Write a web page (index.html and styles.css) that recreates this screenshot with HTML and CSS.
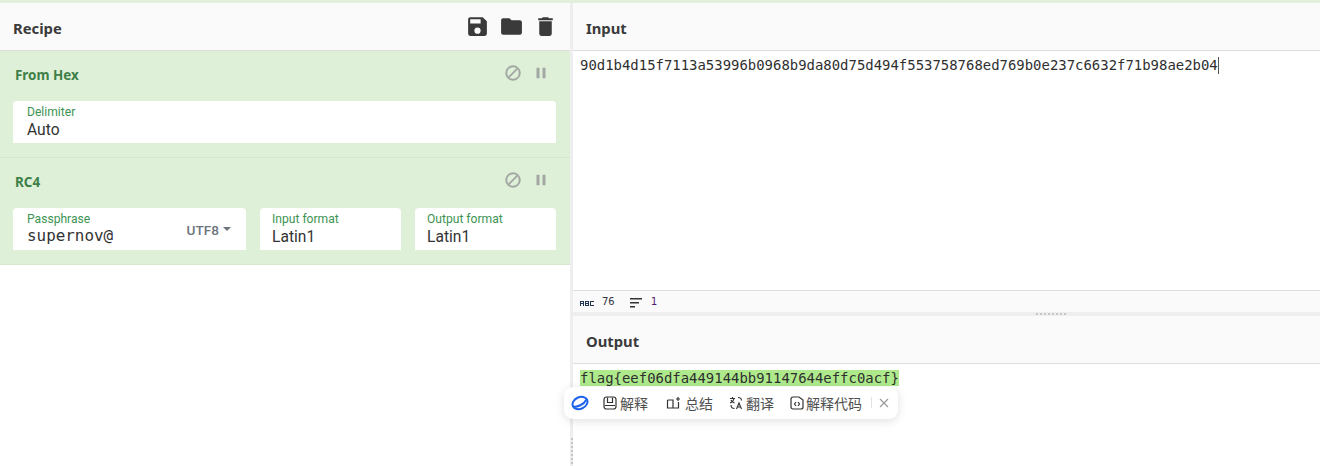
FILE: index.html
```html
<!DOCTYPE html>
<html lang="en">
<head>
<meta charset="utf-8">
<title>Recipe</title>
<link rel="stylesheet" href="styles.css">
</head>
<body>
<div class="topline"></div>
<main class="app">
  <section class="recipe">
    <header class="head">
      <h2>Recipe</h2>
      <div class="head-icons">
        <svg width="25" height="25" viewBox="0 0 24 24"><path d="M17 3H5a2 2 0 0 0-2 2v14a2 2 0 0 0 2 2h14a2 2 0 0 0 2-2V7l-4-4zm-5 16a3 3 0 1 1 0-6 3 3 0 0 1 0 6zm3-10H5V5h10v4z"/></svg>
        <svg width="25" height="25" viewBox="0 0 24 24"><path d="M10 4H4a2 2 0 0 0-2 2v12a2 2 0 0 0 2 2h16a2 2 0 0 0 2-2V8a2 2 0 0 0-2-2h-8l-2-2z"/></svg>
        <svg width="25" height="25" viewBox="0 0 24 24"><path d="M6 19a2 2 0 0 0 2 2h8a2 2 0 0 0 2-2V7H6v12zM19 4h-3.500l-1-1h-5l-1 1H5v2h14V4z"/></svg>
      </div>
    </header>
    <article class="op">
      <div class="op-title">
        <h3>From Hex</h3>
        <div class="op-icons">
          <svg class="ban" width="18" height="18" viewBox="0 0 24 24"><path d="M12 2a10 10 0 1 0 0 20 10 10 0 0 0 0-20zM20 12a8 8 0 0 1-12.900 6.300L18.300 7.100A8 8 0 0 1 20 12zM12 4a8 8 0 0 1 4.900 1.700L5.700 16.900A8 8 0 0 1 12 4z"/></svg>
          <svg width="18" height="18" viewBox="0 0 24 24"><path d="M6 19h4V5H6v14zm8-14v14h4V5h-4z"/></svg>
        </div>
      </div>
      <div class="fields">
        <div class="field grow"><label>Delimiter</label><div class="value">Auto</div></div>
      </div>
    </article>
    <article class="op">
      <div class="op-title">
        <h3>RC4</h3>
        <div class="op-icons">
          <svg class="ban" width="18" height="18" viewBox="0 0 24 24"><path d="M12 2a10 10 0 1 0 0 20 10 10 0 0 0 0-20zM20 12a8 8 0 0 1-12.900 6.300L18.300 7.100A8 8 0 0 1 20 12zM12 4a8 8 0 0 1 4.900 1.700L5.700 16.900A8 8 0 0 1 12 4z"/></svg>
          <svg width="18" height="18" viewBox="0 0 24 24"><path d="M6 19h4V5H6v14zm8-14v14h4V5h-4z"/></svg>
        </div>
      </div>
      <div class="fields">
        <div class="field pass">
          <label>Passphrase</label>
          <div class="value mono">supernov@</div>
          <span class="enc">UTF8<i class="caret"></i></span>
        </div>
        <div class="field fmt"><label>Input format</label><div class="value">Latin1</div></div>
        <div class="field fmt"><label>Output format</label><div class="value">Latin1</div></div>
      </div>
    </article>
  </section>
  <div class="gutter"></div>
  <section class="io">
    <header class="head"><h2>Input</h2></header>
    <div class="text input-text">90d1b4d15f7113a53996b0968b9da80d75d494f553758768ed769b0e237c6632f71b98ae2b04<span class="cursor"></span></div>
    <footer class="status">
      <svg class="abc" width="14" height="6" viewBox="0 0 14 6"><path d="M0 1h4v5H3V4H1v2H0zM1 2v1h2V2zM5 1h4v5H5zM6 2v1h2V2zM6 4v1h2V4zM10 1h4v1h-3v3h3v1h-4z"/></svg>
      <span class="num">76</span>
      <svg class="lines" width="14" height="10" viewBox="0 0 14 10"><path d="M0 0h12v1.500H0zM0 4h9v1.500H0zM0 8h5v1.500H0z"/></svg>
      <span class="num purple">1</span>
    </footer>
    <div class="hbar"><span class="grip-h"></span></div>
    <header class="head"><h2>Output</h2></header>
    <div class="text output-text"><mark>flag{eef06dfa449144bb91147644effc0acf}</mark></div>
  </section>
</main>
<nav class="popup">
  <svg class="logo" width="18" height="18" viewBox="0 0 18 18"><g fill="none" stroke="#1f63ea" stroke-width="2"><ellipse cx="9" cy="9" rx="7.800" ry="5.800" transform="rotate(-25 9 9)"/><path d="M2 12.500C6 13.500 13 10.500 15.500 5.500"/></g></svg>
  <span class="tool first"><svg width="14" height="14" viewBox="0 0 14 14"><g fill="none" stroke="#333" stroke-width="1.200"><rect x="1" y="1" width="12" height="12" rx="2.500"/><path d="M4.500 1.500v5h5v-5M2 9.500h10"/></g></svg>解释</span>
  <span class="tool wide"><svg width="15" height="14" viewBox="0 0 15 14"><g fill="none" stroke="#333" stroke-width="1.200"><path d="M7 4H2.500A1 1 0 0 0 1.500 5v7h5.500zM7 12h5.500V6M7 4v8"/><path d="M12 1v4M10 3h4"/></g></svg>总结</span>
  <span class="tool"><svg width="14" height="14" viewBox="0 0 14 14"><g fill="none" stroke="#333" stroke-width="1.100"><path d="M1 2.500h5M3.500 1v1.500M5 2.500C4.500 5 3 6.500 1 7M2 4c.5 1.500 2 2.500 3.500 3M9 1.500c2 0 3.500 1 3.500 3M2 9c0 2 1.500 3.500 3.500 3.500M7.500 13l2.500-6 2.500 6M8.500 11h3"/></g></svg>翻译</span>
  <span class="tool code"><svg width="14" height="14" viewBox="0 0 14 14"><g fill="none" stroke="#333" stroke-width="1.200"><path d="M3 1h6l4 3v7a2 2 0 0 1-2 2H3a2 2 0 0 1-2-2V3a2 2 0 0 1 2-2z"/><path d="M6 6L4.500 8 6 10M8 6l1.500 2L8 10"/></g></svg>解释代码</span>
  <span class="sep"></span>
  <svg class="close" width="10" height="10" viewBox="0 0 10 10"><path d="M1 1l8 8M9 1l-8 8" stroke="#9a9a9a" stroke-width="1.200" fill="none"/></svg>
</nav>
<span class="grip-low"></span>
</body>
</html>
```
FILE: styles.css
```css
* { box-sizing: border-box; }
html, body { margin: 0; height: 466px; overflow: hidden; background: #fff; }
body { font-family: Roboto, "Noto Sans CJK SC", sans-serif; color: #333; position: relative; }
h2, h3 { margin: 0; }

.topline { height: 3px; background: #e3efdc; }
.app { display: grid; grid-template-columns: 570px 3px 747px; height: 463px; }

.head {
  height: 48px;
  background: #fafafa;
  border-bottom: 1px solid #dddddd;
  display: flex;
  align-items: center;
  justify-content: space-between;
  padding: 0 13px;
}
.head h2 { font-family: "Noto Sans", sans-serif; font-size: 14.800px; font-weight: 700; line-height: 1; color: #3a3a3a; padding-top: 3px; }
.head-icons { display: flex; gap: 9px; fill: #3a3a3a; margin-right: -1px; }
.head-icons svg { display: block; }

.op { background: #dff0d8; border-bottom: 1px solid #d5e7cc; height: 107px; padding: 0 14px 0 13px; }
.op-title { display: flex; justify-content: space-between; align-items: flex-start; height: 50px; }
.op-title h3 { font-family: "Noto Sans", sans-serif; font-size: 13.400px; font-weight: 700; color: #3d7f47; line-height: 16px; padding: 16px 0 0 2px; }
.op-icons { display: flex; gap: 10px; fill: #a3a7a3; padding-top: 13px; margin-right: 6px; }
.op-icons svg { display: block; }
.op-icons .ban { stroke: #a3a7a3; stroke-width: .6; }

.fields { display: flex; gap: 14px; }
.field {
  position: relative;
  background: #fff;
  height: 42px;
  border-radius: 4px 4px 0 0;
  padding: 4px 14px 0;
}
.grow { flex: 1; }
.pass { width: 233px; }
.fmt { width: 141px; padding-left: 12px; }
.field label { display: block; font-size: 12.100px; line-height: 14px; color: #3d9353; }
.value { font-size: 15.600px; line-height: 20px; color: #333; margin-top: 1px; }
.value.mono { font-family: "DejaVu Sans Mono", monospace; font-size: 15.900px; margin-top: 0; }
.enc { position: absolute; right: 15px; top: 14px; font-size: 13.600px; font-weight: 500; line-height: 16px; color: #6c757d; display: flex; align-items: center; gap: 4px; }
.caret { width: 0; height: 0; border-left: 4px solid transparent; border-right: 4px solid transparent; border-top: 4px solid #6c757d; margin-top: -3px; }

.gutter { background: #eeeeee; }

.io { display: flex; flex-direction: column; }
.text {
  font-family: "DejaVu Sans Mono", monospace;
  font-size: 13.950px;
  line-height: 19px;
  color: #2f2f2f;
  padding: 5px 7px 0;
  white-space: pre;
}
.input-text { height: 239px; }
.cursor { display: inline-block; width: 1px; height: 17px; background: #555; vertical-align: -4px; }
.output-text { flex: 1; }
mark { background: #aeea8c; color: #2f2f2f; }

.status {
  height: 22px;
  background: #fafafa;
  border-top: 1px solid #dddddd;
  display: flex;
  align-items: center;
  padding: 0 0 2px 7px;
  font-family: "DejaVu Sans Mono", monospace;
  font-size: 10.500px;
}
.abc { fill: #22364f; margin-top: 5px; }
.num { margin-left: 8px; color: #334; }
.lines { fill: #333; margin-left: 15px; margin-top: 4px; }
.status .purple { color: #4f1a6e; margin-left: 7px; }

.hbar { height: 4px; background: #eeeeee; display: flex; align-items: center; padding-left: 463px; flex: none; }
.grip-h { width: 30px; height: 2px; background: repeating-linear-gradient(90deg, #c6c6c6 0 2px, transparent 2px 4px); }

.popup {
  position: absolute;
  left: 564px;
  top: 387px;
  width: 334px;
  height: 32px;
  background: #fff;
  border-radius: 9px;
  box-shadow: 0 2px 10px rgba(0, 0, 0, .13);
  display: flex;
  align-items: center;
  padding: 0 0 1px 7px;
  font-family: "Noto Sans CJK SC", sans-serif;
  font-size: 14px;
  color: #4f4f4f;
}
.logo { margin-right: 14px; }
.tool { display: flex; align-items: center; gap: 3px; margin-right: 16px; white-space: nowrap; }
.tool.first { margin-right: 18px; }
.tool.wide { gap: 4px; }
.tool.code { margin-right: 9px; gap: 2px; }
.sep { width: 1px; height: 11px; background: #e3e3e3; margin-right: 7px; }
.close { display: block; }

.grip-low {
  position: absolute;
  left: 571px;
  top: 438px;
  width: 2px;
  height: 28px;
  background: repeating-linear-gradient(180deg, #c4c4c4 0 2px, transparent 2px 4px);
}
```
